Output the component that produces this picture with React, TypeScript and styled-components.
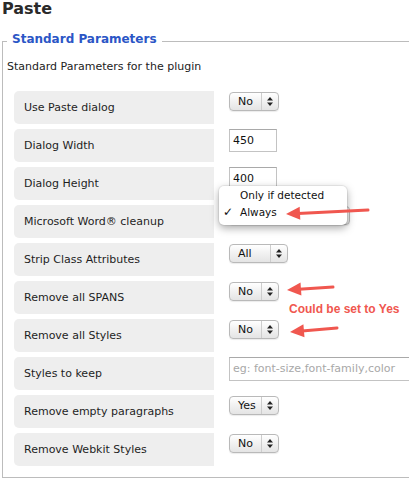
import React from 'react'
import styled, { createGlobalStyle } from 'styled-components'

const GlobalStyle = createGlobalStyle`
  html, body {
    margin: 0;
    padding: 0;
    background: #fff;
    overflow: hidden;
  }
  body {
    font-family: "DejaVu Sans", Verdana, sans-serif;
    color: #222;
  }
`

const Page = styled.div`
  position: relative;
  width: 409px;
  height: 481px;
  overflow: hidden;
  padding-left: 2px;
  box-sizing: border-box;
`

const Title = styled.h1`
  margin: 0 0 15px;
  font-size: 16px;
  line-height: 17px;
  font-weight: bold;
  color: #2a2a2a;
`

const Fieldset = styled.fieldset`
  margin: 0;
  width: 440px;
  box-sizing: border-box;
  border: 1px solid #bcbcbc;
  padding: 0 4px 11px;
  min-width: 0;
`

const Legend = styled.legend`
  padding: 0 5px 4px;
  font-size: 12px;
  line-height: 14px;
  font-weight: bold;
  color: #2b56c6;
`

const Intro = styled.p`
  margin: 10px 0 17px;
  font-size: 11px;
  line-height: 14px;
`

const Rows = styled.div`
  display: flex;
  flex-direction: column;
  gap: 5px;
  margin-left: 7px;
`

const Row = styled.div`
  display: flex;
  align-items: flex-start;
  gap: 15px;
`

const Label = styled.div`
  width: 200px;
  height: 33px;
  flex: none;
  display: flex;
  align-items: center;
  padding-left: 10px;
  box-sizing: border-box;
  background: #eeeeee;
  border-radius: 5px 0 0 5px;
  font-size: 11px;
  color: #1e1e1e;
  white-space: nowrap;
  overflow: hidden;
`

const Control = styled.div`
  position: relative;
  display: flex;
`

const SelectBox = styled.div<{ $width: number }>`
  width: ${p => p.$width}px;
  height: 19px;
  margin-top: 1px;
  box-sizing: border-box;
  display: flex;
  border: 1px solid #b9b9b9;
  border-radius: 4px;
  background: linear-gradient(#ffffff, #f1f1f1 50%, #e4e4e4);
  box-shadow: 0 1px 1px rgba(0, 0, 0, 0.08);
  font-size: 11px;
  color: #111;
`

const SelectValue = styled.span`
  flex: 1;
  padding-left: 8px;
  line-height: 17px;
`

const Stepper = styled.span`
  width: 16px;
  flex: none;
  border-left: 1px solid #cdcdcd;
  display: flex;
  align-items: center;
  justify-content: center;
`

const TextInput = styled.div<{ $width: number; $placeholder?: boolean }>`
  width: ${p => p.$width}px;
  height: ${p => (p.$placeholder ? 24 : 23)}px;
  box-sizing: border-box;
  border: 1px solid #c3c3c3;
  border-top-color: #a9a9a9;
  background: #fff;
  padding-left: 3px;
  font-size: 11px;
  line-height: ${p => (p.$placeholder ? 22 : 21)}px;
  color: ${p => (p.$placeholder ? '#a8a8a8' : '#111')};
  white-space: nowrap;
`

const Menu = styled.div`
  position: absolute;
  left: -10px;
  top: -19px;
  width: 128px;
  padding: 1px 0 4px;
  background: #fff;
  border-radius: 5px;
  box-shadow: 0 3px 9px rgba(0, 0, 0, 0.35), 0 0 0 1px rgba(0, 0, 0, 0.06);
  z-index: 2;
`

const MenuItem = styled.div`
  position: relative;
  padding-left: 21px;
  font-size: 10.5px;
  line-height: 17px;
  color: #111;
`

const Check = styled.span`
  position: absolute;
  left: 4px;
  top: 0;
  font-size: 12px;
  font-weight: bold;
`

const Note = styled.span`
  position: absolute;
  left: 289px;
  top: 302px;
  font-family: "Liberation Sans", Arial, sans-serif;
  font-size: 12px;
  line-height: 14px;
  font-weight: bold;
  color: #f0574f;
  white-space: nowrap;
`

const Overlay = styled.svg`
  position: absolute;
  left: 0;
  top: 0;
  pointer-events: none;
  z-index: 3;
`

const StepperIcon = () => (
  <svg width="6" height="9" viewBox="0 0 6 9">
    <path d="M3 0 L6 3.5 H0 Z" fill="#222" />
    <path d="M3 9 L6 5.5 H0 Z" fill="#222" />
  </svg>
)

const Select = ({ value, width }: { value: string; width: number }) => (
  <SelectBox $width={width}>
    <SelectValue>{value}</SelectValue>
    <Stepper>
      <StepperIcon />
    </Stepper>
  </SelectBox>
)

const Arrow = ({ x1, y1, x2, y2 }: { x1: number; y1: number; x2: number; y2: number }) => {
  // x1,y1 = tail, x2,y2 = tip
  const dx = x2 - x1
  const dy = y2 - y1
  const len = Math.sqrt(dx * dx + dy * dy)
  const ux = dx / len
  const uy = dy / len
  const headLen = 14
  const half = 6.5
  const bx = x2 - ux * headLen
  const by = y2 - uy * headLen
  const head = `${x2},${y2} ${bx - uy * half},${by + ux * half} ${bx + uy * half},${by - ux * half}`
  return (
    <g>
      <line x1={x1} y1={y1} x2={bx + ux * 2} y2={by + uy * 2} stroke="#f0574f" strokeWidth="3" strokeLinecap="round" />
      <polygon points={head} fill="#f0574f" />
    </g>
  )
}

type Ctl =
  | { kind: 'select'; value: string; width: number }
  | { kind: 'input'; value: string }
  | { kind: 'placeholder'; value: string }
  | { kind: 'menu' }

const rows: { label: string; control: Ctl }[] = [
  { label: 'Use Paste dialog', control: { kind: 'select', value: 'No', width: 50 } },
  { label: 'Dialog Width', control: { kind: 'input', value: '450' } },
  { label: 'Dialog Height', control: { kind: 'input', value: '400' } },
  { label: 'Microsoft Word® cleanup', control: { kind: 'menu' } },
  { label: 'Strip Class Attributes', control: { kind: 'select', value: 'All', width: 59 } },
  { label: 'Remove all SPANS', control: { kind: 'select', value: 'No', width: 50 } },
  { label: 'Remove all Styles', control: { kind: 'select', value: 'No', width: 50 } },
  { label: 'Styles to keep', control: { kind: 'placeholder', value: 'eg: font-size,font-family,color' } },
  { label: 'Remove empty paragraphs', control: { kind: 'select', value: 'Yes', width: 50 } },
  { label: 'Remove Webkit Styles', control: { kind: 'select', value: 'No', width: 50 } },
]

const renderControl = (c: Ctl) => {
  switch (c.kind) {
    case 'select':
      return <Select value={c.value} width={c.width} />
    case 'input':
      return <TextInput $width={48}>{c.value}</TextInput>
    case 'placeholder':
      return <TextInput $width={200} $placeholder>{c.value}</TextInput>
    case 'menu':
      // the open list covers the select's own value
      return (
        <>
          <Select value="" width={121} />
          <Menu>
            <MenuItem>Only if detected</MenuItem>
            <MenuItem>
              <Check>✓</Check>
              Always
            </MenuItem>
          </Menu>
        </>
      )
  }
}

const App: React.FC = () => {
  return (
    <Page>
      <GlobalStyle />
      <Title>Paste</Title>
      <Fieldset>
        <Legend>Standard Parameters</Legend>
        <Intro>Standard Parameters for the plugin</Intro>
        <Rows>
          {rows.map(r => (
            <Row key={r.label}>
              <Label>{r.label}</Label>
              <Control>{renderControl(r.control)}</Control>
            </Row>
          ))}
        </Rows>
      </Fieldset>
      <Note>Could be set to Yes</Note>
      <Overlay width="409" height="481">
        <Arrow x1={368} y1={210} x2={286} y2={214} />
        <Arrow x1={333} y1={287} x2={287} y2={290} />
        <Arrow x1={337} y1={328} x2={290} y2={332} />
      </Overlay>
    </Page>
  )
}

export default App
